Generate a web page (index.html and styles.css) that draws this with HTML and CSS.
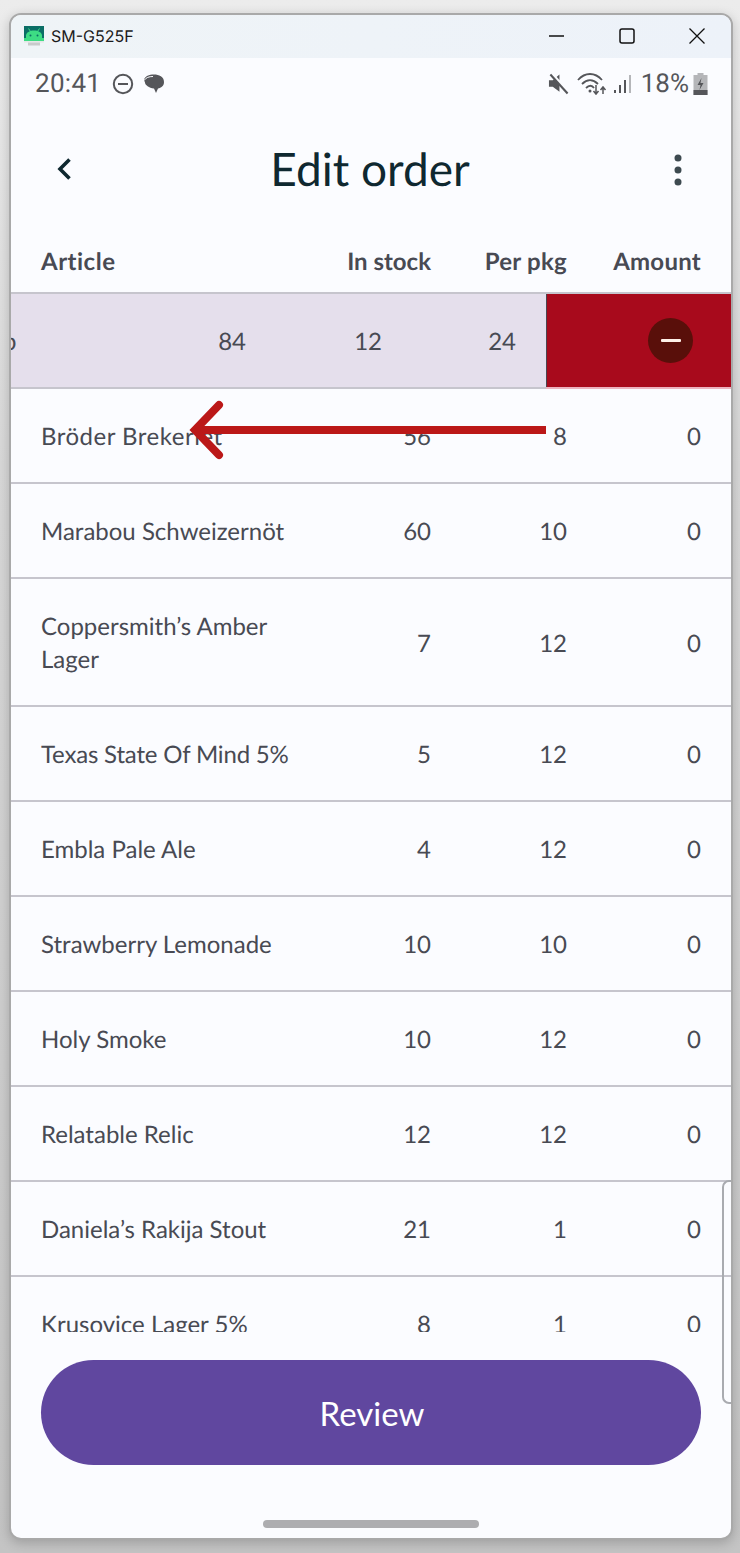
FILE: index.html
```html
<!DOCTYPE html>
<html lang="en">
<head>
<meta charset="utf-8">
<title>Edit order</title>
<link rel="stylesheet" href="styles.css">
</head>
<body>
<div class="window">
  <div class="titlebar">
    <svg class="app-icon" viewBox="0 0 20 20"><rect x="0" y="0" width="20" height="15" fill="#0b6e66"/><path d="M2 15V9.500C2 6.500 6 4.500 10 4.500s8 2 8 5V15z" fill="#3ddc84"/><rect x="0" y="12" width="20" height="3" fill="#3ddc84"/><path d="M4.500 2.500l2 3M15.500 2.500l-2 3" stroke="#3ddc84" stroke-width="1"/><circle cx="6.500" cy="9.500" r="1" fill="#0b6e66"/><circle cx="13.500" cy="9.500" r="1" fill="#0b6e66"/><rect x="0" y="15" width="20" height="1.500" fill="#e4e6e6"/><rect x="4" y="16.500" width="12" height="3" fill="#c8cacb"/></svg>
    <span class="device">SM-G525F</span>
    <div class="win-controls">
      <svg viewBox="0 0 16 16"><path d="M0 8h15" stroke="#111" stroke-width="1.300"/></svg>
      <svg viewBox="0 0 16 16"><rect x="1" y="1" width="14" height="14" rx="2" fill="none" stroke="#111" stroke-width="1.500"/></svg>
      <svg viewBox="0 0 16 16"><path d="M.5.500l15 15M15.500.500l-15 15" stroke="#111" stroke-width="1.300"/></svg>
    </div>
  </div>
  <div class="statusbar">
    <span class="time">20:41</span>
    <svg class="st-dnd" viewBox="0 0 22 22"><circle cx="11" cy="11" r="9.200" fill="none" stroke="#55565a" stroke-width="2"/><path d="M6 11h10" stroke="#55565a" stroke-width="2"/></svg>
    <svg class="st-chat" viewBox="0 0 22 22"><path d="M1 7C2 3 6 1.500 11 1.500c5 0 10 2 10 7.500 0 4-3 6-6 6.500l-2 4.500-2-4.500C6 15 2 12 2 9.500z" fill="#55565a"/><path d="M1 7.500C3 4.500 6 3.500 10 3.500" fill="none" stroke="#fbfcff" stroke-width="1"/></svg>
    <div class="status-right">
      <svg class="st-mute" viewBox="0 0 22 22"><path d="M1 7h4l7-6v18l-7-5H1z" fill="#55565a"/><path d="M3.500 0l18 20" stroke="#fbfcff" stroke-width="3.500"/><path d="M2.500 1l18 20" stroke="#55565a" stroke-width="2.200"/></svg>
      <svg class="st-wifi" viewBox="0 0 30 24"><g fill="none" stroke="#55565a" stroke-width="1.800"><path d="M1 8c7-8 17-8 24 0"/><path d="M5 12c5-5 11-5 16 0"/><path d="M9 16c3-3 6-3 8 0"/></g><circle cx="13" cy="19" r="1.500" fill="#55565a"/><path d="M19 13v9m-2.500-3l2.500 3 2.500-3M26 22v-7m-2.500 3l2.500-3 2.500 3" fill="none" stroke="#55565a" stroke-width="1.500"/></svg>
      <svg class="st-signal" viewBox="0 0 18 20"><path d="M2 16v3M7 11v8M12 6v13" stroke="#55565a" stroke-width="2"/><path d="M17 1v18" stroke="#b5b6b9" stroke-width="2"/></svg>
      <span class="battery-text">18%</span>
      <svg class="st-batt" viewBox="0 0 14 22"><path d="M4 0h6v2h4v20H0V2h4z" fill="#b5b6b9"/><path d="M0 17h14v5H0z" fill="#55565a"/><path d="M8 5l-4 7h3l-1 5 4-7H7z" fill="#55565a"/></svg>
    </div>
  </div>
  <header class="appbar">
    <svg class="back" viewBox="0 0 14 22"><path d="M12.500 1.500L3 11l9.500 9.500" fill="none" stroke="#0f2830" stroke-width="3.600"/></svg>
    <h1>Edit order</h1>
    <svg class="more" viewBox="0 0 8 32"><circle cx="4" cy="4" r="3.500" fill="#3d4a50"/><circle cx="4" cy="16" r="3.500" fill="#3d4a50"/><circle cx="4" cy="28" r="3.500" fill="#3d4a50"/></svg>
  </header>
  <div class="row head">
    <span class="name">Article</span><span class="num stock">In stock</span><span class="num pkg">Per pkg</span><span class="num amt">Amount</span>
  </div>
  <div class="list">
    <div class="swiped">
      <div class="swiped-cells">
        <span class="frag">p</span><span class="num stock s84">84</span><span class="num pkg">12</span><span class="num amt">24</span>
      </div>
      <div class="remove"><span class="remove-btn"><span class="minus"></span></span></div>
    </div>
    <div class="row"><span class="name name-wide">Bröder Brekeriet</span><span class="num stock">56</span><span class="num pkg">8</span><span class="num amt">0</span></div>
    <div class="row"><span class="name">Marabou Schweizernöt</span><span class="num stock">60</span><span class="num pkg">10</span><span class="num amt">0</span></div>
    <div class="row tall"><span class="name">Coppersmith’s Amber Lager</span><span class="num stock">7</span><span class="num pkg">12</span><span class="num amt">0</span></div>
    <div class="row"><span class="name name-tight">Texas State Of Mind 5%</span><span class="num stock">5</span><span class="num pkg">12</span><span class="num amt">0</span></div>
    <div class="row"><span class="name">Embla Pale Ale</span><span class="num stock">4</span><span class="num pkg">12</span><span class="num amt">0</span></div>
    <div class="row"><span class="name">Strawberry Lemonade</span><span class="num stock">10</span><span class="num pkg">10</span><span class="num amt">0</span></div>
    <div class="row"><span class="name">Holy Smoke</span><span class="num stock">10</span><span class="num pkg">12</span><span class="num amt">0</span></div>
    <div class="row"><span class="name">Relatable Relic</span><span class="num stock">12</span><span class="num pkg">12</span><span class="num amt">0</span></div>
    <div class="row"><span class="name">Daniela’s Rakija Stout</span><span class="num stock">21</span><span class="num pkg">1</span><span class="num amt">0</span></div>
    <div class="row"><span class="name">Krusovice Lager 5%</span><span class="num stock">8</span><span class="num pkg">1</span><span class="num amt">0</span></div>
  </div>
  <div class="footer"><button class="review">Review</button></div>
  <div class="home-wrap"><span class="home"></span></div>
  <div class="scroll-tab"></div>
  <svg class="arrow" viewBox="0 0 370 62"><path d="M366 31H16" stroke="#bb1818" stroke-width="8"/><path d="M39 6L15 31l24 25" fill="none" stroke="#bb1818" stroke-width="8" stroke-linecap="round"/></svg>
</div>
</body>
</html>
```
FILE: styles.css
```css
* { box-sizing: border-box; }
html, body { margin: 0; height: 100%; }
body {
  width: 740px;
  height: 1553px;
  background: linear-gradient(#ececec, #d8d8d8 30%, #c4c4c4);
  padding: 13px 7px 13px 9px;
  font-family: "Lato", "Liberation Sans", sans-serif;
  text-rendering: geometricPrecision;
  overflow: hidden;
}
.window {
  position: relative;
  width: 724px;
  height: 1527px;
  background: #fbfcff;
  border: 2px solid #a9a9a9;
  border-radius: 12px;
  box-shadow: 0 3px 12px rgba(0,0,0,.2);
  overflow: hidden;
  display: flex;
  flex-direction: column;
}
.titlebar {
  height: 43px;
  flex: none;
  display: flex;
  align-items: center;
  padding: 0 0 2px 13px;
  background: linear-gradient(90deg, #eff4f7, #edf2f9);
}
.app-icon { width: 20px; height: 20px; }
.device {
  margin-left: 7px;
  font: 16px "Inter", "Liberation Sans", sans-serif;
  color: #1a1a1a;
}
.win-controls {
  margin-left: auto;
  display: flex;
  align-items: center;
  gap: 54px;
  padding-right: 26px;
}
.win-controls svg { width: 16px; height: 16px; display: block; }
.statusbar {
  height: 52px;
  flex: none;
  display: flex;
  align-items: center;
  padding: 0 23px 0 24px;
  color: #55565a;
}
.time { font: 26px "Roboto", sans-serif; letter-spacing: .3px; }
.st-dnd { width: 22px; height: 22px; margin-left: 11px; }
.st-chat { width: 22px; height: 22px; margin-left: 9px; }
.status-right { margin-left: auto; display: flex; align-items: center; }
.st-mute { width: 21px; height: 22px; }
.st-wifi { width: 30px; height: 24px; margin-left: 8px; }
.st-signal { width: 18px; height: 20px; margin-left: 6px; }
.battery-text { font: 26px "Roboto", sans-serif; margin-left: 10px; }
.st-batt { width: 15px; height: 22px; margin-left: 4px; }
.appbar {
  height: 124px;
  flex: none;
  display: flex;
  align-items: center;
  justify-content: center;
  position: relative;
  padding: 0 2px 8px 0;
}
.appbar h1 {
  margin: 0;
  font-weight: 400;
  font-size: 46px;
  color: #0f2830;
}
.back { position: absolute; left: 46px; top: 48px; width: 14px; height: 22px; }
.more { position: absolute; right: 49px; top: 44px; width: 8px; height: 32px; }
.row {
  display: flex;
  align-items: center;
  height: 95px;
  padding: 2px 0 0 30px;
  font-size: 24px;
  color: #484a53;
  border-bottom: 2px solid #c6c5cd;
  flex: none;
}
.row.tall { height: 128px; }
.row.head {
  height: 60px;
  font-weight: 700;
  padding-top: 0;
  padding-bottom: 4px;
  letter-spacing: .25px;
}
.row.head .name { letter-spacing: .5px; }
.row.head .stock { letter-spacing: 0; }
.name { width: 260px; line-height: 33px; flex: none; }
.name-wide { letter-spacing: .5px; }
.name-tight { letter-spacing: -.18px; }
.num { text-align: right; flex: none; white-space: nowrap; }
.stock { width: 130px; }
.pkg { width: 136px; }
.amt { width: 134px; }
.list {
  height: 1038px;
  flex: none;
  overflow: hidden;
}
.swiped {
  height: 95px;
  display: flex;
  background: #e5dfec;
  border-bottom: 2px solid #c6c5cd;
  font-size: 24px;
  color: #484a53;
}
.swiped-cells {
  width: 535px;
  flex: none;
  display: flex;
  align-items: center;
  overflow: hidden;
  padding-top: 2px;
}
.frag { width: 75px; flex: none; margin-left: -8px; }
.s84 { width: 168px; }
.remove {
  flex: 1;
  background: #a80a1c;
  border-left: 1px solid #4a4650;
  box-shadow: 0 2px 0 #edb3bf;
  display: flex;
  align-items: center;
  justify-content: flex-end;
  padding-right: 38px;
}
.remove-btn {
  width: 45px;
  height: 45px;
  border-radius: 50%;
  background: #590f0a;
  display: flex;
  align-items: center;
  justify-content: center;
}
.minus { width: 20px; height: 3px; background: #fff0e8; border-radius: 1px; }
.footer {
  flex: none;
  height: 133px;
  padding: 28px 30px 0;
}
.review {
  width: 660px;
  height: 105px;
  border: 0;
  padding: 0 0 0 2px;
  border-radius: 53px;
  background: #60479f;
  color: #fff;
  font: 33px "Lato", sans-serif;
}
.home-wrap { display: flex; justify-content: center; padding-top: 55px; }
.home { width: 216px; height: 8px; border-radius: 4px; background: #adadb0; }
.scroll-tab {
  position: absolute;
  right: -1px;
  top: 1165px;
  width: 10px;
  height: 224px;
  border: 2px solid #a9abb0;
  border-right: 0;
  border-radius: 7px 0 0 7px;
}
.arrow {
  position: absolute;
  left: 169px;
  top: 384px;
  width: 370px;
  height: 62px;
}
```
